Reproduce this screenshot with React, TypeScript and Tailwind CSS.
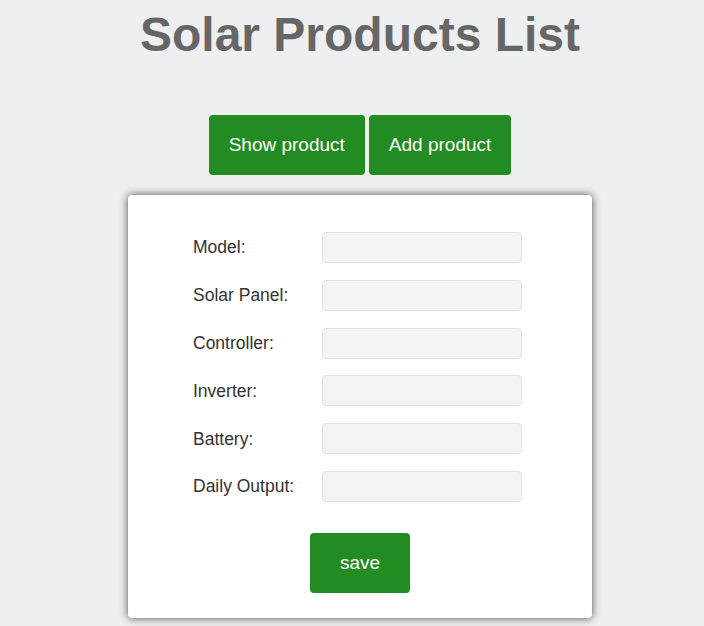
import { useState } from 'react';

const fields = ['Model', 'Solar Panel', 'Controller', 'Inverter', 'Battery', 'Daily Output'];

export default function App() {
  const [values, setValues] = useState<Record<string, string>>({});

  return (
    <div className="min-h-screen bg-[#eeeff1] pl-4 pt-[7px] font-['Liberation_Sans',Arial,sans-serif]">
      <h1 className="text-center text-[48px] leading-[55px] font-bold text-[#666666]">Solar Products List</h1>

      <div className="mt-[53px] flex justify-center gap-1">
        <button className="h-[60px] px-5 pt-px rounded bg-[#228b22] text-white text-[19px]">Show product</button>
        <button className="h-[60px] px-5 pt-px rounded bg-[#228b22] text-white text-[19px]">Add product</button>
      </div>

      {/* Form card */}
      <div className="mx-auto mt-5 w-[464px] rounded bg-white pt-[37px] pb-[25px] shadow-[0_0_9px_rgba(0,0,0,0.7)]">
        <div className="flex flex-col gap-[16.8px] pl-[65px]">
          {fields.map((f) => (
            <div key={f} className="flex items-center">
              <label className="w-[129px] text-[17.5px] text-[#333333]">{f}:</label>
              <input
                value={values[f] ?? ''}
                onChange={(e) => setValues({ ...values, [f]: e.target.value })}
                className="h-[31px] w-[200px] rounded border border-[#e2e2e2] bg-[#f4f4f4] px-2 outline-none"
              />
            </div>
          ))}
        </div>
        <div className="mt-[31px] flex justify-center">
          <button className="h-[60px] w-[100px] pt-px rounded bg-[#228b22] text-white text-[19px]">save</button>
        </div>
      </div>
    </div>
  );
}
